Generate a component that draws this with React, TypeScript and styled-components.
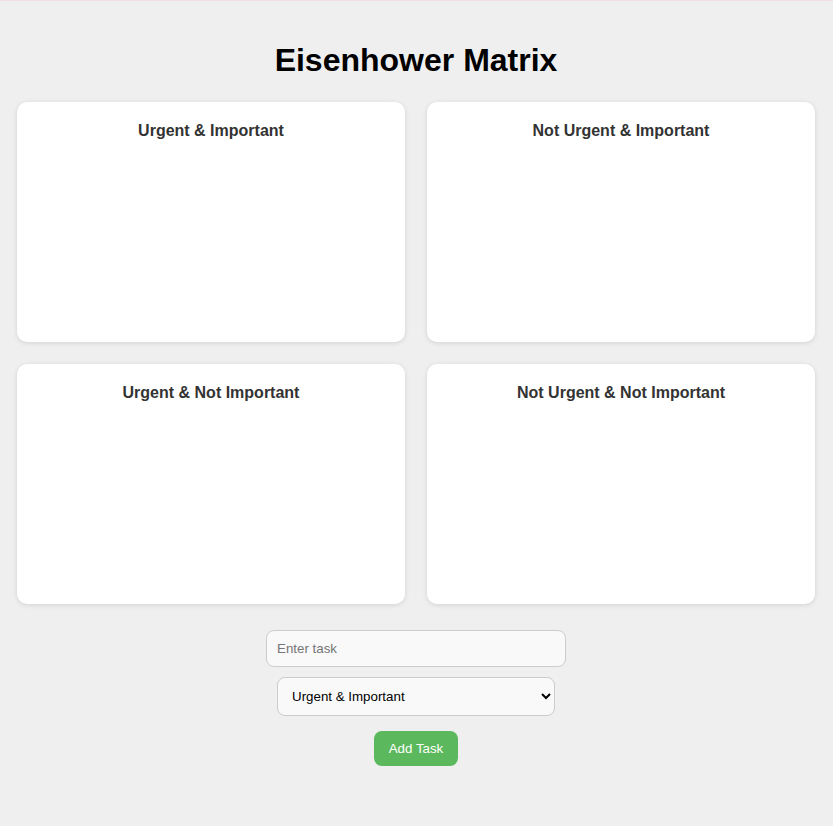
import React from "react";
import styled, { createGlobalStyle } from "styled-components";

const GlobalStyle = createGlobalStyle`
  html, body {
    margin: 0;
    padding: 0;
    background: #efefef;
  }
  body {
    min-height: 100vh;
    border-top: 1px solid #f2dde4;
    box-sizing: border-box;
    font-family: "Liberation Sans", Arial, sans-serif;
  }
`;

const Page = styled.div`
  display: flex;
  flex-direction: column;
  align-items: center;
  padding: 20px 18px 40px 17px;
`;

const Title = styled.h1`
  margin: 21px 0 23px;
  font-size: 32px;
  font-weight: 700;
  color: #000;
  line-height: normal;
`;

const Grid = styled.div`
  align-self: stretch;
  display: grid;
  grid-template-columns: 1fr 1fr;
  grid-auto-rows: 240px;
  gap: 22px;
`;

const Quadrant = styled.section`
  background: #fff;
  border-radius: 10px;
  box-shadow: 0 1px 5px rgba(0, 0, 0, 0.12);
  padding: 20px;
  box-sizing: border-box;
`;

const QuadrantTitle = styled.h3`
  margin: 0;
  text-align: center;
  font-size: 16px;
  font-weight: 700;
  color: #333;
  line-height: normal;
`;

const Form = styled.div`
  display: flex;
  flex-direction: column;
  align-items: center;
  margin-top: 26px;
`;

const TaskInput = styled.input`
  width: 300px;
  height: 37px;
  box-sizing: border-box;
  padding: 10px;
  border: 1px solid #ccc;
  border-radius: 8px;
  background: #f9f9f9;
  font-family: "Liberation Sans", Arial, sans-serif;
  font-size: 13.33px;
  color: #000;
  outline: none;
  &::placeholder {
    color: #757575;
  }
`;

const QuadrantSelect = styled.select`
  margin-top: 10px;
  width: 278px;
  height: 39px;
  box-sizing: border-box;
  padding: 0 6px 0 10px;
  border: 1px solid #ccc;
  border-radius: 8px;
  background: #f9f9f9;
  font-family: "Liberation Sans", Arial, sans-serif;
  font-size: 13.33px;
  color: #000;
`;

const AddButton = styled.button`
  margin-top: 15px;
  width: 84px;
  height: 35px;
  padding: 0;
  border: none;
  border-radius: 8px;
  background: #5cb85c;
  color: #fff;
  font-family: "Liberation Sans", Arial, sans-serif;
  font-size: 13.33px;
  cursor: pointer;
`;

const quadrants = [
  "Urgent & Important",
  "Not Urgent & Important",
  "Urgent & Not Important",
  "Not Urgent & Not Important",
];

export default function App() {
  return (
    <>
      <GlobalStyle />
      <Page>
        <Title>Eisenhower Matrix</Title>
        <Grid>
          {quadrants.map((q) => (
            <Quadrant key={q}>
              <QuadrantTitle>{q}</QuadrantTitle>
            </Quadrant>
          ))}
        </Grid>
        <Form>
          <TaskInput placeholder="Enter task" />
          <QuadrantSelect defaultValue={quadrants[0]}>
            {quadrants.map((q) => (
              <option key={q} value={q}>
                {q}
              </option>
            ))}
          </QuadrantSelect>
          <AddButton>Add Task</AddButton>
        </Form>
      </Page>
    </>
  );
}
